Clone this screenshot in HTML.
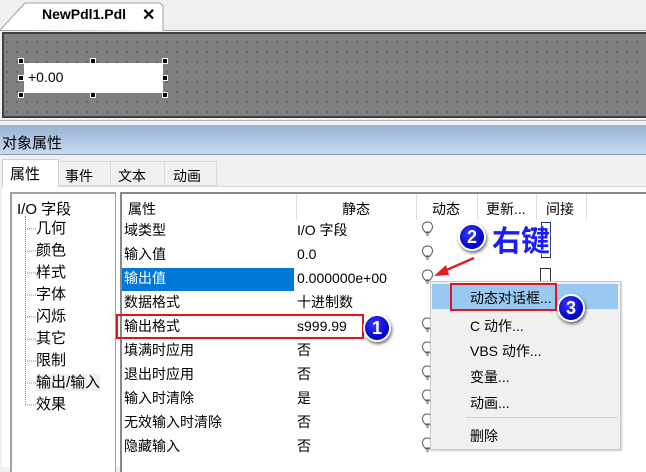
<!DOCTYPE html>
<html><head><meta charset="utf-8"><style>
*{margin:0;padding:0;box-sizing:border-box}
body{width:646px;height:467px;overflow:hidden;background:#f0f0f0;font-family:"Liberation Sans","Noto Sans CJK SC",sans-serif;font-size:14px;color:#000;position:relative}
.a{position:absolute;white-space:nowrap}
.circ{position:absolute;width:28px;height:28px;border-radius:50%;background:radial-gradient(circle at 40% 35%,#3a3aff,#0000c0 70%);border:2px solid #fff;box-shadow:1px 2px 3px rgba(0,0,0,.6);color:#fff;font-weight:bold;font-size:18px;text-align:center;line-height:24px}
</style></head><body>
<div class="a" style="left:0;top:0;width:646px;height:31px;background:#f0f0f0;border-bottom:1px solid #a0a0a0"></div>
<svg class="a" style="left:0;top:0" width="164" height="32"><path d="M0,30 L25,3 L160,3 L163,6 L163,31" fill="#fff" stroke="#a0a0a0"/></svg>
<div class="a" style="left:42px;top:6px;font-weight:bold;font-size:14px">NewPdl1.Pdl</div>
<div class="a" style="left:142px;top:5px;font-weight:bold;font-size:16px">✕</div>
<div class="a" style="left:2px;top:32px;width:644px;height:86px;background-color:#808080;border:2px solid #404040;border-right:none;background-image:radial-gradient(circle,#111 0.6px,transparent 0.8px);background-size:10px 10px;background-position:8px 3px"></div>
<div class="a" style="left:24px;top:63px;width:139px;height:30px;background:#fff"></div>
<div class="a" style="left:28px;top:69px;font-size:14px">+0.00</div>
<div class="a" style="left:18px;top:58px;width:6px;height:6px;background:#000;border:1px solid #fff"></div>
<div class="a" style="left:90px;top:58px;width:6px;height:6px;background:#000;border:1px solid #fff"></div>
<div class="a" style="left:162px;top:58px;width:6px;height:6px;background:#000;border:1px solid #fff"></div>
<div class="a" style="left:18px;top:75px;width:6px;height:6px;background:#000;border:1px solid #fff"></div>
<div class="a" style="left:162px;top:75px;width:6px;height:6px;background:#000;border:1px solid #fff"></div>
<div class="a" style="left:18px;top:92px;width:6px;height:6px;background:#000;border:1px solid #fff"></div>
<div class="a" style="left:90px;top:92px;width:6px;height:6px;background:#000;border:1px solid #fff"></div>
<div class="a" style="left:162px;top:92px;width:6px;height:6px;background:#000;border:1px solid #fff"></div>
<div class="a" style="left:0;top:120px;width:646px;height:1px;background:#b0b0b8"></div>
<div class="a" style="left:0;top:125px;width:646px;height:30px;background:linear-gradient(#98b3d3,#c6d9ee);border-bottom:1px solid #8a9ab0"></div>
<div class="a" style="left:2px;top:132px;font-size:15px">对象属性</div>
<div class="a" style="left:2px;top:186px;width:644px;height:1px;background:#d8d8d8"></div>
<div class="a" style="left:2px;top:159px;width:57px;height:28px;background:#fff;border:1px solid #d0d0d0;border-bottom:none"></div>
<div class="a" style="left:59px;top:161px;width:52px;height:25px;border:1px solid #d8d8d8;border-left:none"></div>
<div class="a" style="left:111px;top:161px;width:54px;height:25px;border:1px solid #d8d8d8;border-left:none"></div>
<div class="a" style="left:165px;top:161px;width:52px;height:25px;border:1px solid #d8d8d8;border-left:none"></div>
<div class="a" style="left:10px;top:163px;font-size:15px">属性</div>
<div class="a" style="left:65px;top:166px">事件</div>
<div class="a" style="left:118px;top:166px">文本</div>
<div class="a" style="left:173px;top:166px">动画</div>
<div class="a" style="left:2px;top:187px;width:644px;height:280px;background:#fff"></div>
<div class="a" style="left:10px;top:192px;width:106px;height:280px;border:1px solid #a0a0a0;border-width:2px 1px 0 2px;background:#fff"></div>
<div class="a" style="left:17px;top:198px;font-size:15px">I/O 字段</div>
<div class="a" style="left:25px;top:216px;width:1px;height:188px;border-left:1px dotted #888"></div>
<div class="a" style="left:36px;top:218px;font-size:15px;line-height:22px">几何<br>颜色<br>样式<br>字体<br>闪烁<br>其它<br>限制<br><span style="background:#f0f0f0">输出/输入</span><br>效果</div>
<svg class="a" style="left:25px;top:218px" width="12" height="200"><g stroke="#888" stroke-dasharray="1,1"><line x1="0" y1="11" x2="11" y2="11"/><line x1="0" y1="33" x2="11" y2="33"/><line x1="0" y1="55" x2="11" y2="55"/><line x1="0" y1="77" x2="11" y2="77"/><line x1="0" y1="99" x2="11" y2="99"/><line x1="0" y1="121" x2="11" y2="121"/><line x1="0" y1="143" x2="11" y2="143"/><line x1="0" y1="165" x2="11" y2="165"/><line x1="0" y1="187" x2="11" y2="187"/></g></svg>
<div class="a" style="left:120px;top:192px;width:526px;height:280px;border-top:2px solid #888;border-left:2px solid #888;background:#fff"></div>
<div class="a" style="left:296px;top:194px;width:1px;height:26px;background:#e0e0e0"></div>
<div class="a" style="left:416px;top:194px;width:1px;height:26px;background:#e0e0e0"></div>
<div class="a" style="left:477px;top:194px;width:1px;height:26px;background:#e0e0e0"></div>
<div class="a" style="left:536px;top:194px;width:1px;height:26px;background:#e0e0e0"></div>
<div class="a" style="left:586px;top:194px;width:1px;height:26px;background:#e0e0e0"></div>
<div class="a" style="left:128px;top:199px">属性</div>
<div class="a" style="left:342px;top:199px">静态</div>
<div class="a" style="left:432px;top:199px">动态</div>
<div class="a" style="left:486px;top:199px">更新...</div>
<div class="a" style="left:546px;top:199px">间接</div>
<div class="a" style="left:122px;top:268px;width:172px;height:23px;background:#0078d7"></div>
<div class="a" style="left:124px;top:218px;line-height:24px;font-size:14px">域类型<br>输入值<br><span style="color:#fff">输出值</span><br>数据格式<br>输出格式<br>填满时应用<br>退出时应用<br>输入时清除<br>无效输入时清除<br>隐藏输入</div>
<div class="a" style="left:297px;top:218px;line-height:24px;font-size:14px">I/O 字段<br>0.0<br>0.000000e+00<br>十进制数<br>s999.99<br>否<br>否<br>是<br>否<br>否</div>
<svg class="a" style="left:421px;top:220px" width="14" height="240"><g fill="#fff" stroke="#555" stroke-width="1">
<path d="M4,12 C0,8 1,2 6.5,2 C12,2 13,8 9,12 Z M4.5,13 H8.5 M5,15 H8"/>
<path transform="translate(0,24)" d="M4,12 C0,8 1,2 6.5,2 C12,2 13,8 9,12 Z M4.5,13 H8.5 M5,15 H8"/>
<path transform="translate(0,48)" d="M4,12 C0,8 1,2 6.5,2 C12,2 13,8 9,12 Z M4.5,13 H8.5 M5,15 H8"/>
<path transform="translate(0,96)" d="M4,12 C0,8 1,2 6.5,2 C12,2 13,8 9,12 Z M4.5,13 H8.5 M5,15 H8"/>
<path transform="translate(0,120)" d="M4,12 C0,8 1,2 6.5,2 C12,2 13,8 9,12 Z M4.5,13 H8.5 M5,15 H8"/>
<path transform="translate(0,144)" d="M4,12 C0,8 1,2 6.5,2 C12,2 13,8 9,12 Z M4.5,13 H8.5 M5,15 H8"/>
<path transform="translate(0,168)" d="M4,12 C0,8 1,2 6.5,2 C12,2 13,8 9,12 Z M4.5,13 H8.5 M5,15 H8"/>
<path transform="translate(0,192)" d="M4,12 C0,8 1,2 6.5,2 C12,2 13,8 9,12 Z M4.5,13 H8.5 M5,15 H8"/>
<path transform="translate(0,216)" d="M4,12 C0,8 1,2 6.5,2 C12,2 13,8 9,12 Z M4.5,13 H8.5 M5,15 H8"/>
</g></svg>
<div class="a" style="left:541px;top:222px;width:10px;height:36px;border:1px solid #1e3a6a;background:#fff"></div>
<div class="a" style="left:540px;top:268px;width:11px;height:14px;border:1px solid #333;background:#fff"></div>
<div class="a" style="left:116px;top:314px;width:248px;height:25px;border:2px solid #e0141e"></div>
<div class="circ" style="left:363px;top:314px">1</div>
<div class="circ" style="left:458px;top:223px">2</div>
<div class="a" style="left:492px;top:218px;font-size:29px;font-weight:bold;color:#1a1aff;text-shadow:0 0 2px #fff,1px 1px 2px #fff">右键</div>
<svg class="a" style="left:430px;top:252px" width="60" height="30"><line x1="44" y1="6" x2="12" y2="20" stroke="#e02020" stroke-width="2.5"/><path d="M4,24 L16,13 L19,23 Z" fill="#e02020"/></svg>
<div class="a" style="left:430px;top:281px;width:191px;height:169px;background:#f0f0f0;border:1px solid #c8c8c8;box-shadow:1px 1px 2px rgba(0,0,0,.2)"></div>
<div class="a" style="left:432px;top:284px;width:186px;height:25px;background:#99c9f0"></div>
<div class="a" style="left:466px;top:417px;width:152px;height:1px;background:#d0d0d0"></div>
<div class="a" style="left:470px;top:288px">动态对话框...</div>
<div class="a" style="left:470px;top:316px">C 动作...</div>
<div class="a" style="left:470px;top:341px">VBS 动作...</div>
<div class="a" style="left:470px;top:367px">变量...</div>
<div class="a" style="left:470px;top:393px">动画...</div>
<div class="a" style="left:470px;top:426px">删除</div>
<div class="a" style="left:450px;top:283px;width:107px;height:28px;border:2px solid #e0141e"></div>
<div class="circ" style="left:557px;top:294px">3</div>
</body></html>
